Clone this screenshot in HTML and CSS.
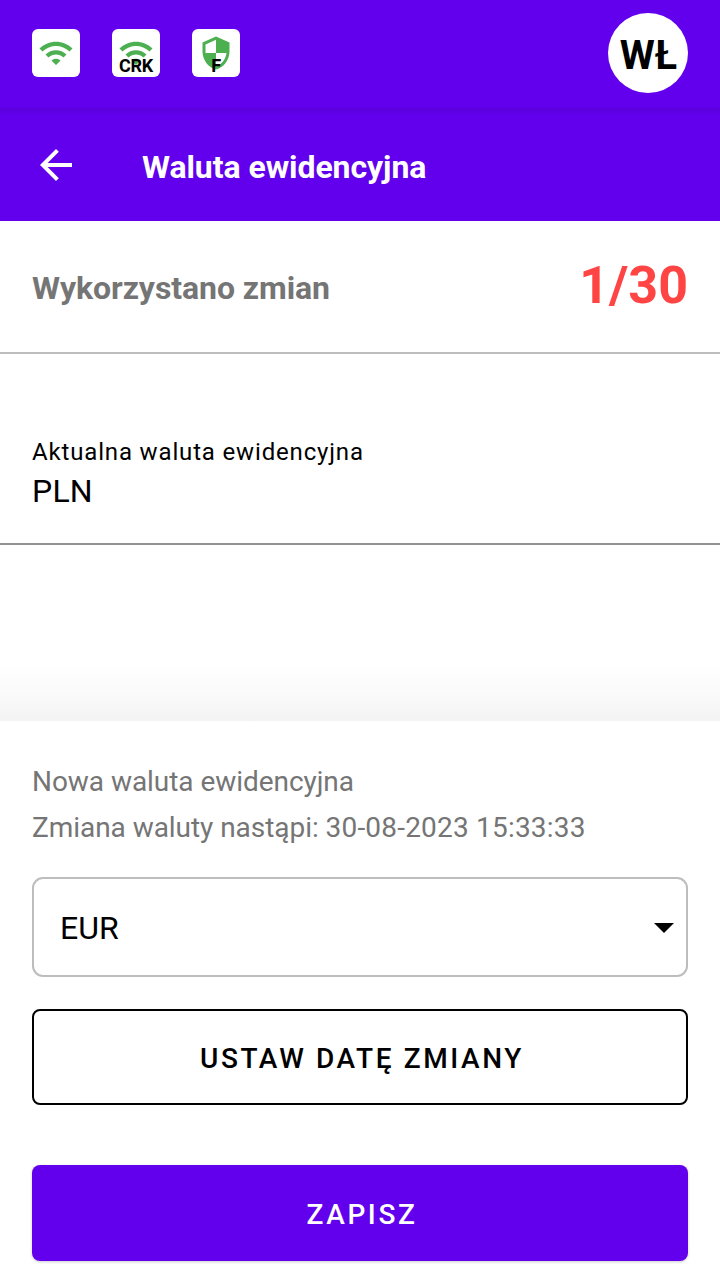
FILE: index.html
```html
<!DOCTYPE html>
<html lang="pl">
<head>
<meta charset="utf-8">
<title>Waluta ewidencyjna</title>
<link rel="stylesheet" href="styles.css">
</head>
<body>
<header class="status-bar">
  <div class="badge"><svg viewBox="0 0 24 24"><path d="M1 9l2 2c4.97-4.97 13.03-4.97 18 0l2-2C16.93 2.93 7.08 2.93 1 9zm8 8l3 3 3-3c-1.65-1.66-4.34-1.66-6 0zm-4-4l2 2c2.76-2.76 7.24-2.76 10 0l2-2C15.14 9.14 8.87 9.14 5 13z"/></svg></div>
  <div class="badge"><svg viewBox="0 0 24 24"><path d="M1 9l2 2c4.97-4.97 13.03-4.97 18 0l2-2C16.93 2.93 7.08 2.93 1 9zm8 8l3 3 3-3c-1.65-1.66-4.34-1.66-6 0zm-4-4l2 2c2.76-2.76 7.24-2.76 10 0l2-2C15.14 9.14 8.87 9.14 5 13z"/></svg><span class="badge-label">CRK</span></div>
  <div class="badge"><svg viewBox="0 0 24 24"><path d="M12 1L3 5v6c0 5.55 3.84 10.74 9 12 5.16-1.26 9-6.45 9-12V5l-9-4zm0 10.99h7c-.53 4.12-3.28 7.79-7 8.94V12H5V6.3l7-3.11v8.8z"/></svg><span class="badge-label">F</span></div>
  <div class="avatar">WŁ</div>
</header>
<nav class="app-bar">
  <svg class="back" viewBox="0 0 24 24"><path d="M20 11H7.83l5.59-5.59L12 4l-8 8 8 8 1.41-1.41L7.83 13H20v-2z"/></svg>
  <h1 class="title">Waluta ewidencyjna</h1>
</nav>
<section class="usage">
  <span class="usage-label">Wykorzystano zmian</span>
  <span class="usage-count">1/30</span>
</section>
<section class="current">
  <span class="current-label">Aktualna waluta ewidencyjna</span>
  <span class="current-value">PLN</span>
</section>
<div class="spacer"></div>
<main class="panel">
  <p class="note">Nowa waluta ewidencyjna</p>
  <p class="note note-date">Zmiana waluty nastąpi: <span class="date">30-08-2023 15:33:33</span></p>
  <div class="select"><span>EUR</span><svg class="caret" viewBox="0 0 20 10"><path d="M0 0h20L10 10z"/></svg></div>
  <button class="button outlined">USTAW DATĘ ZMIANY</button>
  <button class="button filled">ZAPISZ</button>
</main>
</body>
</html>
```
FILE: styles.css
```css
* {
  box-sizing: border-box;
}

body {
  margin: 0;
  height: 1281px;
  overflow: hidden;
  display: flex;
  flex-direction: column;
  background: #fff;
  color: #000;
  font-family: Roboto, "Noto Sans", sans-serif;
}

.status-bar {
  height: 108px;
  padding: 13px 32px 15px;
  display: flex;
  align-items: center;
  gap: 32px;
  background: #6200ee;
}

.badge {
  position: relative;
  width: 48px;
  height: 48px;
  padding: 6px;
  border-radius: 6px;
  background: #fff;
}

.badge svg {
  display: block;
  width: 36px;
  height: 36px;
  fill: #4caf50;
}

.badge-label {
  position: absolute;
  left: 0;
  right: 0;
  bottom: 1px;
  font-size: 18px;
  font-weight: 700;
  line-height: 21px;
  letter-spacing: -0.2px;
  text-align: center;
}

.avatar {
  width: 80px;
  height: 80px;
  margin-left: auto;
  padding: 3px 0 0 1px;
  border-radius: 50%;
  background: #fff;
  font-size: 40px;
  font-weight: 700;
  line-height: 80px;
  text-align: center;
}

.app-bar {
  height: 113px;
  padding: 0 32px;
  display: flex;
  align-items: center;
  gap: 62px;
  background: linear-gradient(#5a00da, #6200ee 8px);
}

.back {
  width: 48px;
  height: 48px;
  fill: #fff;
}

.title {
  margin: 4px 0 0;
  color: #fff;
  font-size: 32px;
  font-weight: 700;
  line-height: 38px;
  letter-spacing: -0.07px;
}

.usage {
  height: 133px;
  padding: 0 32px;
  display: flex;
  align-items: center;
  justify-content: space-between;
  border-bottom: 2px solid #bdbdbd;
  font-weight: 700;
}

.usage-label {
  padding-top: 3px;
  color: #757575;
  font-size: 32px;
  letter-spacing: -0.07px;
}

.usage-count {
  padding-bottom: 2px;
  color: #ff4444;
  font-size: 52px;
}

.current {
  height: 191px;
  padding: 84px 32px 0;
  display: flex;
  flex-direction: column;
  border-bottom: 2px solid #919191;
}

.current-label {
  font-size: 24px;
  line-height: 28px;
  letter-spacing: 0.84px;
}

.current-value {
  margin-top: 6px;
  font-size: 32px;
  line-height: 38px;
  letter-spacing: 0.2px;
}

.spacer {
  height: 176px;
  background: linear-gradient(#fff 118px, #fafafa 150px, #f3f3f3);
}

.panel {
  flex: 1;
  padding: 44px 32px 20px;
  display: flex;
  flex-direction: column;
}

.note {
  margin: 0;
  color: #757575;
  font-size: 28px;
  line-height: 33px;
  letter-spacing: -0.05px;
}

.note-date {
  margin-top: 13px;
}

.date {
  letter-spacing: 0.2px;
}

.select {
  height: 100px;
  margin-top: 33px;
  padding: 2px 12px 0 26px;
  display: flex;
  align-items: center;
  justify-content: space-between;
  border: 2px solid #bdbdbd;
  border-radius: 11px;
  font-size: 32px;
}

.caret {
  width: 20px;
  height: 10px;
}

.button {
  height: 96px;
  padding: 2px 0 0 4px;
  border: 0;
  border-radius: 8px;
  font: 500 28px/33px Roboto, "Noto Sans", sans-serif;
  letter-spacing: 2.6px;
}

.outlined {
  margin-top: 32px;
  border: 2px solid #000;
  background: #fff;
  color: #000;
}

.filled {
  margin-top: 60px;
  background: #6200ee;
  color: #fff;
  box-shadow: 0 1px 3px rgba(0, 0, 0, 0.2);
}
```
